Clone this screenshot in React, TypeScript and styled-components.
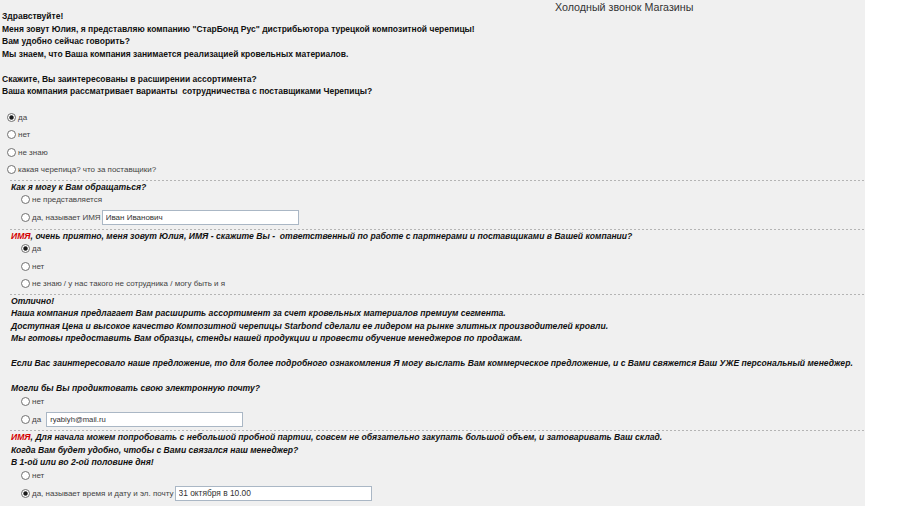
import styled, { createGlobalStyle } from "styled-components";

const Global = createGlobalStyle`
  html, body {
    margin: 0;
    padding: 0;
    background: #ffffff;
  }
  body {
    font-family: "Liberation Sans", Arial, sans-serif;
  }
`;

const Panel = styled.div`
  width: 865px;
  background: #f0f0f0;
  color: #000;
`;

const Title = styled.div`
  height: 10px;
  line-height: 14px;
  padding-left: 555px;
  font-size: 10.7px;
  color: #333;
  white-space: nowrap;
`;

const Text = styled.div<{ $italic?: boolean }>`
  padding-left: ${({ $italic }) => ($italic ? "11px" : "2px")};
  font-size: ${({ $italic }) => ($italic ? "8.6px" : "8.5px")};
  font-weight: bold;
  font-style: ${({ $italic }) => ($italic ? "italic" : "normal")};
  line-height: 12.5px;
  white-space: nowrap;
  color: #111;
`;

const Red = styled.span`
  color: #d40000;
`;

const Options = styled.div<{ $indent: number; $top: number }>`
  display: flex;
  flex-direction: column;
  padding-left: ${({ $indent }) => $indent}px;
  margin-top: ${({ $top }) => $top}px;
  padding-bottom: 1.5px;
`;

const Row = styled.label<{ $tall?: boolean }>`
  display: flex;
  align-items: center;
  height: ${({ $tall }) => ($tall ? "19px" : "17.5px")};
  font-size: 8px;
  color: #444;
  white-space: nowrap;
`;

const Radio = styled.input.attrs({ type: "radio" })`
  appearance: none;
  width: 9px;
  height: 9px;
  margin: 0 2px 0 0;
  border: 1px solid #707070;
  border-radius: 50%;
  background: #fff;
  box-sizing: border-box;
  flex: none;

  &:checked {
    background: radial-gradient(circle, #1a1a1a 0 1.6px, #8a8a8a 2.2px, #fff 2.6px);
  }
`;

const Field = styled.input<{ $width: number; $gap: number; $size: number }>`
  width: ${({ $width }) => $width}px;
  height: 15px;
  margin: 0 0 0 ${({ $gap }) => $gap}px;
  padding: 0 3px;
  box-sizing: border-box;
  border: 1px solid #aab7c5;
  background: #fff;
  font-family: "Liberation Sans", Arial, sans-serif;
  font-size: ${({ $size }) => $size}px;
  color: #333;
  outline: none;
`;

const Divider = styled.div`
  height: 1px;
  margin-left: 10px;
  background: repeating-linear-gradient(90deg, #b4b4b4 0 2px, transparent 2px 4px);
`;

const Bottom = styled.div`
  height: 12px;
  margin-top: 2px;
  background: #e4e4e4;
`;

type Option = {
  label: string;
  checked?: boolean;
  field?: { value: string; width: number; gap: number; size: number };
};

const OptionList = ({ name, items, indent, top }: { name: string; items: Option[]; indent: number; top: number }) => (
  <Options $indent={indent} $top={top}>
    {items.map((o) => (
      <Row key={o.label} $tall={!!o.field}>
        <Radio name={name} defaultChecked={o.checked} />
        {o.label}
        {o.field && (
          <Field $width={o.field.width} $gap={o.field.gap} $size={o.field.size} defaultValue={o.field.value} />
        )}
      </Row>
    ))}
  </Options>
);

export default function App() {
  return (
    <>
      <Global />
      <Panel>
        <Title>Холодный звонок Магазины</Title>
        <Text>
          Здравствуйте!
          <br />
          Меня зовут Юлия, я представляю компанию "СтарБонд Рус" дистрибьютора турецкой композитной черепицы!
          <br />
          Вам удобно сейчас говорить?
          <br />
          Мы знаем, что Ваша компания занимается реализацией кровельных материалов.
          <br />
          <br />
          Скажите, Вы заинтересованы в расширении ассортимента?
          <br />
          Ваша компания рассматривает варианты&nbsp; сотрудничества с поставщиками Черепицы?
        </Text>
        <OptionList
          name="q1"
          indent={7}
          top={10.75}
          items={[
            { label: "да", checked: true },
            { label: "нет" },
            { label: "не знаю" },
            { label: "какая черепица? что за поставщики?" },
          ]}
        />
        <Divider />

        <Text $italic>Как я могу к Вам обращаться?</Text>
        <OptionList
          name="q2"
          indent={21}
          top={-2.5}
          items={[
            { label: "не представляется" },
            { label: "да, называет ИМЯ", field: { value: "Иван Иванович", width: 197, gap: 1, size: 8 } },
          ]}
        />
        <Divider />

        <Text $italic>
          <Red>ИМЯ</Red>, очень приятно, меня зовут Юлия, ИМЯ - скажите Вы -&nbsp; ответственный по работе с партнерами и
          поставщиками в Вашей компании?
        </Text>
        <OptionList
          name="q3"
          indent={21}
          top={-2.5}
          items={[
            { label: "да", checked: true },
            { label: "нет" },
            { label: "не знаю / у нас такого не сотрудника / могу быть и я" },
          ]}
        />
        <Divider />

        <Text $italic>
          Отлично!
          <br />
          Наша компания предлагает Вам расширить ассортимент за счет кровельных материалов премиум сегмента.
          <br />
          Доступная Цена и высокое качество Композитной черепицы Starbond сделали ее лидером на рынке элитных производителей
          кровли.
          <br />
          Мы готовы предоставить Вам образцы, стенды нашей продукции и провести обучение менеджеров по продажам.
          <br />
          <br />
          Если Вас заинтересовало наше предложение, то для более подробного ознакомления Я могу выслать Вам коммерческое
          предложение, и с Вами свяжется Ваш УЖЕ персональный менеджер.
          <br />
          <br />
          Могли бы Вы продиктовать свою электронную почту?
        </Text>
        <OptionList
          name="q4"
          indent={21}
          top={-2.5}
          items={[{ label: "нет" }, { label: "да", field: { value: "ryabiyh@mail.ru", width: 197, gap: 5, size: 7.7 } }]}
        />
        <Divider />

        <Text $italic>
          <Red>ИМЯ</Red>, Для начала можем попробовать с небольшой пробной партии, совсем не обязательно закупать большой
          объем, и затоваривать Ваш склад.
          <br />
          Когда Вам будет удобно, чтобы с Вами связался наш менеджер?
          <br />В 1-ой или во 2-ой половине дня!
        </Text>
        <OptionList
          name="q5"
          indent={21}
          top={-2.5}
          items={[
            { label: "нет" },
            {
              label: "да, называет время и дату и эл. почту",
              checked: true,
              field: { value: "31 октября в 10.00", width: 197, gap: 1, size: 8.4 },
            },
          ]}
        />
        <Bottom />
      </Panel>
    </>
  );
}
